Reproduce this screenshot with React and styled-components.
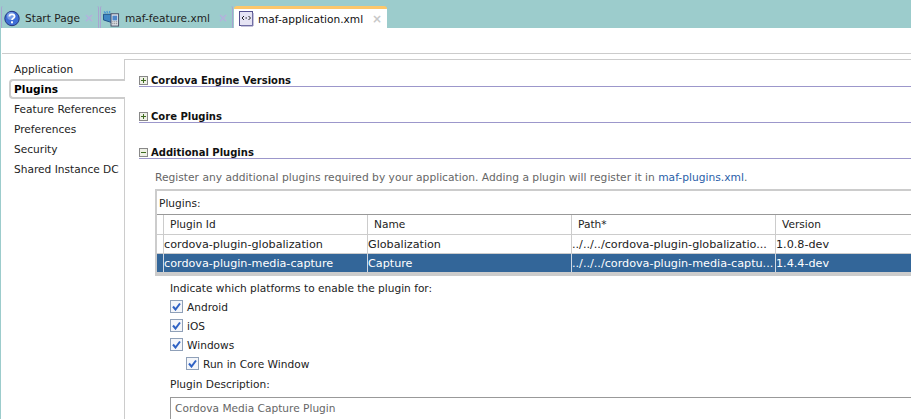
import React from 'react';
import styled, { createGlobalStyle } from 'styled-components';

const GlobalStyle = createGlobalStyle`
    html, body {
        margin: 0;
        padding: 0;
        background: #fff;
    }
    body {
        font-family: "DejaVu Sans", sans-serif;
        font-size: 10.6px;
        color: #222;
    }
`;

const App = () => (
    <Page>
        <GlobalStyle />
        <TabBar>
            <Tab $w={98}>
                <HelpIcon />
                <TabLabel>Start Page</TabLabel>
                <TabClose>×</TabClose>
            </Tab>
            <Tab $w={133}>
                <FeatureIcon />
                <TabLabel>maf-feature.xml</TabLabel>
                <TabClose>×</TabClose>
            </Tab>
            <ActiveTab>
                <XmlIcon />
                <TabLabel>maf-application.xml</TabLabel>
                <TabClose $active>×</TabClose>
            </ActiveTab>
        </TabBar>
        <Editor>
            <Toolbar />
            <Body>
                <Nav>
                    <NavItem>Application</NavItem>
                    <NavItem $selected>Plugins</NavItem>
                    <NavItem>Feature References</NavItem>
                    <NavItem>Preferences</NavItem>
                    <NavItem>Security</NavItem>
                    <NavItem>Shared Instance DC</NavItem>
                </Nav>
                <Content>
                    <Section>
                        <Expander />
                        <SectionTitle>Cordova Engine Versions</SectionTitle>
                    </Section>
                    <Section>
                        <Expander />
                        <SectionTitle>Core Plugins</SectionTitle>
                    </Section>
                    <Section>
                        <Expander $open />
                        <SectionTitle>Additional Plugins</SectionTitle>
                    </Section>
                    <Details>
                        <Hint>
                            Register any additional plugins required by your application. Adding a plugin will register it in <HintLink>maf-plugins.xml</HintLink>.
                        </Hint>
                        <TablePanel>
                            <PanelLabel>Plugins:</PanelLabel>
                            <Row $header>
                                <Gutter />
                                <HeadCell $fixed>Plugin Id</HeadCell>
                                <HeadCell $fixed>Name</HeadCell>
                                <HeadCell $fixed>Path*</HeadCell>
                                <HeadCell>Version</HeadCell>
                            </Row>
                            <Row>
                                <Gutter />
                                <Cell $fixed>cordova-plugin-globalization</Cell>
                                <Cell $fixed>Globalization</Cell>
                                <Cell $fixed>../../../cordova-plugin-globalizatio...</Cell>
                                <Cell>1.0.8-dev</Cell>
                            </Row>
                            <Row $selected>
                                <Gutter $selected />
                                <Cell $fixed $selected>cordova-plugin-media-capture</Cell>
                                <Cell $fixed $selected>Capture</Cell>
                                <Cell $fixed $selected>../../../cordova-plugin-media-captu...</Cell>
                                <Cell $selected>1.4.4-dev</Cell>
                            </Row>
                        </TablePanel>
                        <Options>
                            <OptionLabel>Indicate which platforms to enable the plugin for:</OptionLabel>
                            <Check label="Android" />
                            <Check label="iOS" />
                            <Check label="Windows" />
                            <Check label="Run in Core Window" nested />
                            <OptionLabel>Plugin Description:</OptionLabel>
                            <Description>Cordova Media Capture Plugin</Description>
                        </Options>
                    </Details>
                </Content>
            </Body>
        </Editor>
    </Page>
);

export default App;

const Check = ({ label, nested }) => (
    <CheckRow $nested={nested}>
        <CheckBox>
            <svg width="9" height="9" viewBox="0 0 9 9">
                <path d="M1 4.5 L3.5 7.5 L8 1.5" fill="none" stroke="#2f62c4" strokeWidth="2" />
            </svg>
        </CheckBox>
        <span>{label}</span>
    </CheckRow>
);

const HelpIcon = () => (
    <IconSlot $w={16} $gap={5}>
        <svg width="17" height="17" viewBox="0 0 16 16">
            <circle cx="8" cy="8" r="7.2" fill="#3f6fd6" stroke="#23357f" />
            <circle cx="7" cy="5.5" r="4" fill="#9dbcf2" opacity="0.6" />
            <path d="M5.4 6 C5.4 3.2 10.6 3.2 10.6 6 C10.6 7.8 8 7.8 8 9.6" fill="none" stroke="#fff" strokeWidth="1.8" />
            <rect x="7" y="10.8" width="2" height="2" fill="#fff" />
        </svg>
    </IconSlot>
);

const FeatureIcon = () => (
    <IconSlot $w={17} $gap={5}>
        <svg width="18" height="17" viewBox="0 0 18 17">
            <path d="M0.5 4 L10 4 L10 13 L0.5 10 Z" fill="#3f87c4" stroke="#1f4f86" />
            <path d="M1 1 L3 3 M4 0.5 L5 3 M7 0.5 L7 3" stroke="#4d9bd6" strokeWidth="1.4" />
            <rect x="8.5" y="3.5" width="8" height="13" fill="#dfe3ea" stroke="#444c66" />
            <rect x="10" y="5.5" width="5" height="5" fill="#4d86c8" />
            <path d="M10 12 h5 M10 14 h5" stroke="#666" strokeDasharray="1 1" />
        </svg>
    </IconSlot>
);

const XmlIcon = () => (
    <IconSlot $w={15} $gap={4}>
        <svg width="15" height="16" viewBox="0 0 15 16">
            <rect x="0.5" y="0.5" width="13" height="14" fill="#e6e4f4" stroke="#55518f" />
            <path d="M14 2 V15 H2" fill="none" stroke="#8d8ab8" />
            <path d="M5 5 L3 7 L5 9 M9.5 5 L11.5 7 L9.5 9" fill="none" stroke="#222" />
            <path d="M6.5 7 h1.5" stroke="#222" />
        </svg>
    </IconSlot>
);

const Page = styled.div`
    width: 911px;
    height: 419px;
    overflow: hidden;
    display: flex;
    flex-direction: column;
    background: #9ccccc;
`;

const TabBar = styled.div`
    display: flex;
    align-items: flex-end;
    height: 28px;
    flex-shrink: 0;
    padding-left: 1px;
`;

const Tab = styled.div`
    display: flex;
    align-items: center;
    box-sizing: border-box;
    width: ${props => props.$w}px;
    height: 22px;
    padding: 2px 0 0 2px;
    border-right: 1px solid #a8a4d0;
    border-left: 1px solid #a8a4d0;
    border-radius: 2px 2px 0 0;
    margin-right: 1px;
    color: #222;
`;

const ActiveTab = styled.div`
    display: flex;
    align-items: center;
    box-sizing: border-box;
    height: 22px;
    width: 153px;
    padding-left: 5px;
    background: #fff;
    border-top: 3px solid #fdc76a;
    border-radius: 3px 3px 0 0;
    color: #111;
`;

const IconSlot = styled.span`
    display: flex;
    width: ${props => props.$w}px;
    flex-shrink: 0;
    margin-right: ${props => props.$gap}px;
`;

const TabLabel = styled.span`
    white-space: nowrap;
`;

const TabClose = styled.span`
    margin-left: auto;
    margin-right: ${props => props.$active ? "5px" : "4px"};
    font-size: 12px;
    font-weight: 700;
    color: ${props => props.$active ? "#c8c8c8" : "#b3b3dc"};
`;

const Editor = styled.div`
    flex: 1;
    display: flex;
    flex-direction: column;
    min-height: 0;
    margin-left: 1px;
    background: #fff;
`;

const Toolbar = styled.div`
    height: 25px;
    margin-left: 1px;
    border-bottom: 1px solid #ccc;
    flex-shrink: 0;
`;

const Body = styled.div`
    flex: 1;
    display: flex;
    min-height: 0;
`;

const Nav = styled.div`
    width: 123px;
    flex-shrink: 0;
    padding: 5px 0 0 8px;
    box-sizing: border-box;
    display: flex;
    flex-direction: column;
`;

const NavItem = styled.div`
    height: 20px;
    line-height: 20px;
    padding-left: 5px;
    white-space: nowrap;
    color: #222;
    ${props => props.$selected && `
        margin-right: -1px;
        position: relative;
        box-sizing: border-box;
        font-weight: 700;
        color: #000;
        background: #fff;
        border: 2px solid #ccc;
        border-right: none;
        border-radius: 4px 0 0 4px;
        line-height: 16px;
        padding-left: 3px;
    `}
`;

const Content = styled.div`
    flex: 1;
    min-width: 0;
    margin-top: 5px;
    border-top: 1px solid #ccc;
    border-left: 1px solid #ccc;
    padding: 14px 0 0 14px;
`;

const Section = styled.div`
    display: flex;
    align-items: center;
    height: 12px;
    margin-bottom: 23px;
    border-bottom: 1px solid #9c97cb;
    &:nth-of-type(3) {
        margin-bottom: 0;
    }
`;

const Expander = styled.span`
    position: relative;
    width: 9px;
    height: 9px;
    margin-right: 3px;
    box-sizing: border-box;
    flex-shrink: 0;
    border: 1px solid #888;
    background: #eef0e6;
    &::before {
        content: "";
        position: absolute;
        left: 1px;
        top: 3px;
        width: 5px;
        height: 1px;
        background: #3d6b1f;
    }
    &::after {
        content: "";
        display: ${props => props.$open ? "none" : "block"};
        position: absolute;
        left: 3px;
        top: 1px;
        width: 1px;
        height: 5px;
        background: #3d6b1f;
    }
`;

const SectionTitle = styled.span`
    font-size: 10px;
    font-weight: 700;
    color: #111;
    white-space: nowrap;
`;

const Details = styled.div`
    padding-left: 16px;
`;

const Hint = styled.div`
    margin-top: 12px;
    height: 13px;
    line-height: 13px;
    font-size: 10.7px;
    color: #666;
    white-space: nowrap;
`;

const HintLink = styled.span`
    color: #2a5ea8;
`;

const TablePanel = styled.div`
    margin-top: 5px;
    border-top: 2px solid #ccc;
    border-left: 2px solid #ccc;
    border-bottom: 3px solid #ccc;
`;

const PanelLabel = styled.div`
    height: 23px;
    line-height: 24px;
    padding-left: 2px;
    color: #222;
`;

const Row = styled.div`
    display: flex;
    height: ${props => props.$header ? "21px" : "19px"};
    box-sizing: border-box;
    border-top: ${props => props.$header ? "1px solid #999" : "none"};
    border-bottom: 1px solid #ccc;
    background: ${props => props.$selected ? "#336699" : "#fff"};
`;

const Gutter = styled.div`
    width: 6px;
    flex-shrink: 0;
    border-right: 1px solid ${props => props.$selected ? "#cfd8e3" : "#ccc"};
`;

const HeadCell = styled.div`
    width: ${props => props.$fixed ? "204px" : "auto"};
    flex: ${props => props.$fixed ? "none" : 1};
    padding-left: 6px;
    box-sizing: border-box;
    line-height: 19px;
    color: #222;
    border-right: ${props => props.$fixed ? "1px solid #ccc" : "none"};
`;

const Cell = styled.div`
    width: ${props => props.$fixed ? "204px" : "auto"};
    flex: ${props => props.$fixed ? "none" : 1};
    padding-left: 0;
    box-sizing: border-box;
    font-size: 11.2px;
    line-height: 19px;
    white-space: nowrap;
    overflow: hidden;
    color: ${props => props.$selected ? "#fff" : "#222"};
    border-right: ${props => props.$fixed ? `1px solid ${props.$selected ? "#cfd8e3" : "#ccc"}` : "none"};
`;

const Options = styled.div`
    padding-left: 15px;
    display: flex;
    flex-direction: column;
`;

const OptionLabel = styled.div`
    height: 18px;
    line-height: 19px;
    margin-top: 3px;
    color: #222;
    & ~ & {
        margin-top: 0;
        height: 24px;
        line-height: 23px;
    }
`;

const CheckRow = styled.div`
    display: flex;
    align-items: center;
    gap: 4px;
    height: 19px;
    padding-left: ${props => props.$nested ? "16px" : "0"};
    color: #222;
`;

const CheckBox = styled.span`
    display: flex;
    align-items: center;
    justify-content: center;
    width: 13px;
    height: 13px;
    box-sizing: border-box;
    background: #f4f6fa;
    border: 1px solid #8fa0b8;
`;

const Description = styled.div`
    height: 30px;
    line-height: 20px;
    padding-left: 4px;
    border: 1px solid #999;
    border-right: none;
    color: #666;
`;
